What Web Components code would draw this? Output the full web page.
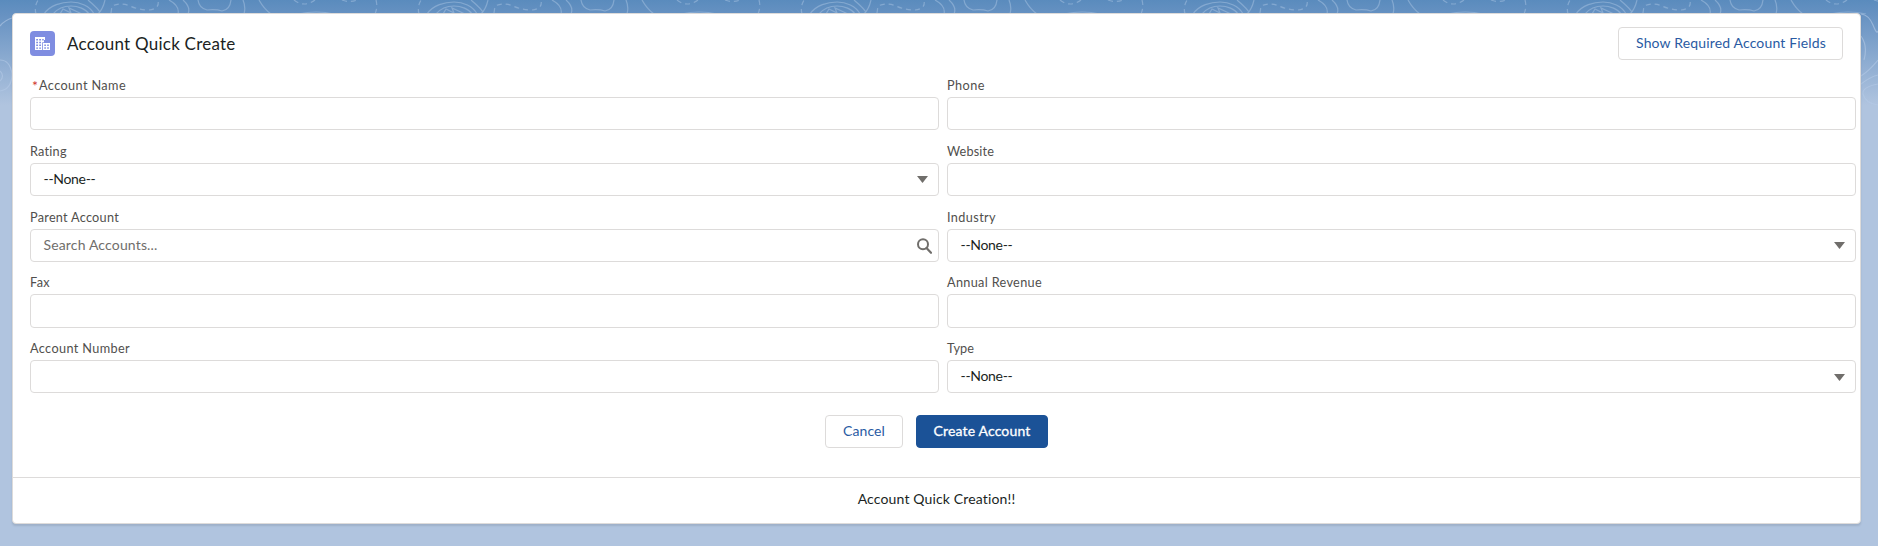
<!DOCTYPE html>
<html lang="en">
<head>
<meta charset="utf-8">
<title>Account Quick Create</title>
<style>
body{margin:0;font-family:Lato,"Noto Sans",sans-serif;color:#201f1e}
</style>
</head>
<body>
<app-backdrop>
<quick-card heading="Account Quick Create">
<ui-button slot="action" style="width:225px" fit="190">Show Required Account Fields</ui-button>
<form-field label="Account Name" fit="87" required></form-field>
<form-field label="Phone" fit="38"></form-field>
<form-field label="Rating" fit="37" kind="select" value="--None--" vfit="52"></form-field>
<form-field label="Website" fit="47"></form-field>
<form-field label="Parent Account" fit="89" kind="search" value="Search Accounts..." vfit="114"></form-field>
<form-field label="Industry" fit="49" kind="select" value="--None--" vfit="52"></form-field>
<form-field label="Fax" fit="20"></form-field>
<form-field label="Annual Revenue" fit="95"></form-field>
<form-field label="Account Number" fit="100"></form-field>
<form-field label="Type" fit="27" kind="select" value="--None--" vfit="52"></form-field>
<ui-button slot="buttons" style="width:78px" fit="42">Cancel</ui-button>
<ui-button slot="buttons" style="width:132px" fit="97" brand>Create Account</ui-button>
<fit-text slot="footer" width="158">Account Quick Creation!!</fit-text>
</quick-card>
</app-backdrop>
<script>
class Base extends HTMLElement{
  constructor(){super();this.attachShadow({mode:'open'});}
  attr(n){return this.getAttribute(n)||'';}
}
customElements.define('ui-button',class extends Base{
  connectedCallback(){
    const b=this.hasAttribute('brand');
    this.shadowRoot.innerHTML=`<style>:host{display:block}
    button{box-sizing:border-box;width:100%;height:33px;padding:0 0 1px 1px;border:1px solid ${b?'#1b5297':'#dddbda'};border-radius:4px;background:${b?'#1b5297':'#fff'};color:${b?'#fff':'#2a5ba3'};font-family:inherit;font-size:14px;line-height:30px;${b?'-webkit-text-stroke:.3px #fff;':''}display:flex;justify-content:center;align-items:center}</style>
    <button><fit-text width="${this.attr('fit')}">${this.textContent}</fit-text></button>`;
  }
});
customElements.define('form-field',class extends Base{
  connectedCallback(){
    const k=this.attr('kind'),v=this.attr('value');
    const icon=k==='select'?'<svg class="c" width="11" height="7"><path d="M0 0H11L5.5 7Z" fill="#706e6b"/></svg>':
      k==='search'?'<svg class="s" width="15" height="16" fill="none" stroke="#706e6b"><circle cx="6" cy="6.2" r="5" stroke-width="2"/><path d="M9.5 10L14 14.8" stroke-width="2.2" stroke-linecap="round"/></svg>':'';
    this.shadowRoot.innerHTML=`<style>:host{display:block;min-width:0}
    label{display:flex;height:20px;font-size:12.7px;line-height:16px;color:#514f4d}
    .req{color:#d0342e;font-size:14px;line-height:18px;margin:0 1px 0 2px;width:6px}
    .box{box-sizing:border-box;height:33.3px;border:1px solid #dddbda;border-radius:4px;padding:0 10px 1px 12.5px;display:flex;align-items:center;justify-content:space-between;font-size:14px;line-height:30px;color:${k==='search'?'#706e6b':'#201f1e'}}
    svg{display:block}.c{margin-top:2px}.s{margin:3px -4px 0 0}.gap{flex:1}</style>
    <label>${this.hasAttribute('required')?'<span class="req">*</span>':''}<fit-text width="${this.attr('fit')}">${this.attr('label')}</fit-text></label>
    <div class="box">${v?`<fit-text width="${this.attr('vfit')}">${v}</fit-text>`:'<span class="gap"></span>'}${icon}</div>`;
  }
});
customElements.define('quick-card',class extends Base{
  connectedCallback(){
    this.shadowRoot.innerHTML=`<style>
    :host{display:flex;flex-direction:column;box-sizing:border-box;height:511px;border:1px solid #dddbda;border-radius:4px;background:#fff;box-shadow:0 2px 2px rgba(0,0,0,.1)}
    header{box-sizing:border-box;display:flex;align-items:center;height:60px;padding:0 17px 1px}
    header>svg{margin-right:12px}
    .t{flex:1;font-size:17px;line-height:26px;padding-top:1px}
    .grid{display:grid;grid-template-columns:909px 909px;column-gap:8px;row-gap:12.5px;padding:3px 0 0 17px}
    .buttons{display:flex;justify-content:center;gap:13px;padding:21.5px 0 0 16px;margin-left:-17px}
    footer{margin-top:auto;height:45px;border-top:1px solid #dddbda;text-align:center;font-size:14px;line-height:42px}</style>
    <header><svg width="25" height="25" viewBox="0 0 25 25"><rect width="25" height="25" rx="4" fill="#7f8de1"/><path d="M5 6H15V9H14V11.3H12.2V19H5ZM13 12H20V19H13Z" fill="#fff"/><path d="M6.2 8h1.8v1.5H6.2zM9.2 8h1.8v1.5H9.2zM12.2 8h1.5v1.5h-1.5zM6.2 10.8h1.8v1.5H6.2zM9.2 10.8h1.8v1.5H9.2zM6.2 13.6h1.8v1.5H6.2zM9.2 13.6h1.8v1.5H9.2zM6.2 16.4h1.8v1.4H6.2zM9.2 16.4h1.8v1.4H9.2zM14.3 13.6h1.6v1.5h-1.6zM17.2 13.6h1.6v1.5h-1.6zM14.3 16.3h1.6v1.5h-1.6zM17.2 16.3h1.6v1.5h-1.6z" fill="#7f8de1"/></svg>
    <div class="t"><fit-text width="168.5">${this.attr('heading')}</fit-text></div><slot name="action"></slot></header>
    <div class="grid"><slot></slot></div><div class="buttons"><slot name="buttons"></slot></div>
    <footer><slot name="footer"></slot></footer>`;
  }
});
// Page background: gradient with a repeated contour-map pattern.
customElements.define('app-backdrop',class extends Base{
  connectedCallback(){
    this.shadowRoot.innerHTML=`<style>:host{display:block;box-sizing:border-box;height:546px;padding:13px 17px 0 12px;position:relative;overflow:hidden;background:linear-gradient(#5a8bbd 0,#6792c2 15px,#b0c4df 105px)}
    .map{position:absolute;left:0;top:0}::slotted(*){position:relative}</style>
    <svg class="map" width="1878" height="110"><defs><pattern id="p" width="383" height="110" patternUnits="userSpaceOnUse"><g fill="none" stroke="#9dbbdc" stroke-opacity=".6" stroke-width="1.2">
    <path d="M44 14C50 5 62 2 71 2S90 6 94 14M53 14C58 8 64 6 71 6S86 9 89 14M88 0C94 5 99 9 101 14M105 0Q103 9 98 14"/>
    <path d="M60 14L63 9L71 13L69 8L82 14"/><path d="M111 13L112 6Q121 2 130 6T149 10Q160 9 158 0M36 14Q34 7 38 0" stroke-dasharray="5 4"/>
    <path d="M169 0Q180 6 178 14M183 0Q191 7 188 14M198 0Q199 8 207 10Q216 9 222 11Q230 10 231 0M243 0Q246 7 244 14M259 0Q264 9 271 14M298 14Q317 10 334 14"/>
    <path d="M294 0Q304 8 315 0M342 0Q350 3 357 0M376 0Q378 7 375 14" stroke-dasharray="5 4"/></g></pattern></defs>
    <rect width="1878" height="14" fill="url(#p)"/>
    <g fill="none" stroke="#b4cae6" stroke-opacity=".6" stroke-width="1.2"><path d="M0 26Q5 20 12 18M0 60Q10 60 12 74Q12 89 0 91M0 71Q5 76 0 81"/><path d="M1861 14Q1869 15 1873 25T1878 31M1861 36Q1868 46 1864 60M1861 76Q1870 70 1878 60M1861 84Q1870 77 1878 75M1878 84Q1862 87 1863 94Q1865 103 1878 105"/></g></svg><slot></slot>`;
  }
});
// Single line of text whose tracking is adjusted to a given width.
// Defined last, so that every ancestor's font is in place when it measures.
customElements.define('fit-text',class extends Base{
  connectedCallback(){
    this.shadowRoot.innerHTML='<style>:host{display:inline-block;white-space:pre}span{display:inline-block}</style><span><slot></slot></span>';
    const s=this.shadowRoot.querySelector('span'),t=+this.attr('width'),n=this.textContent.length;
    if(t){const w=s.getBoundingClientRect().width;s.style.letterSpacing=(t-w)/n+'px';}
  }
});
</script>
</body>
</html>
